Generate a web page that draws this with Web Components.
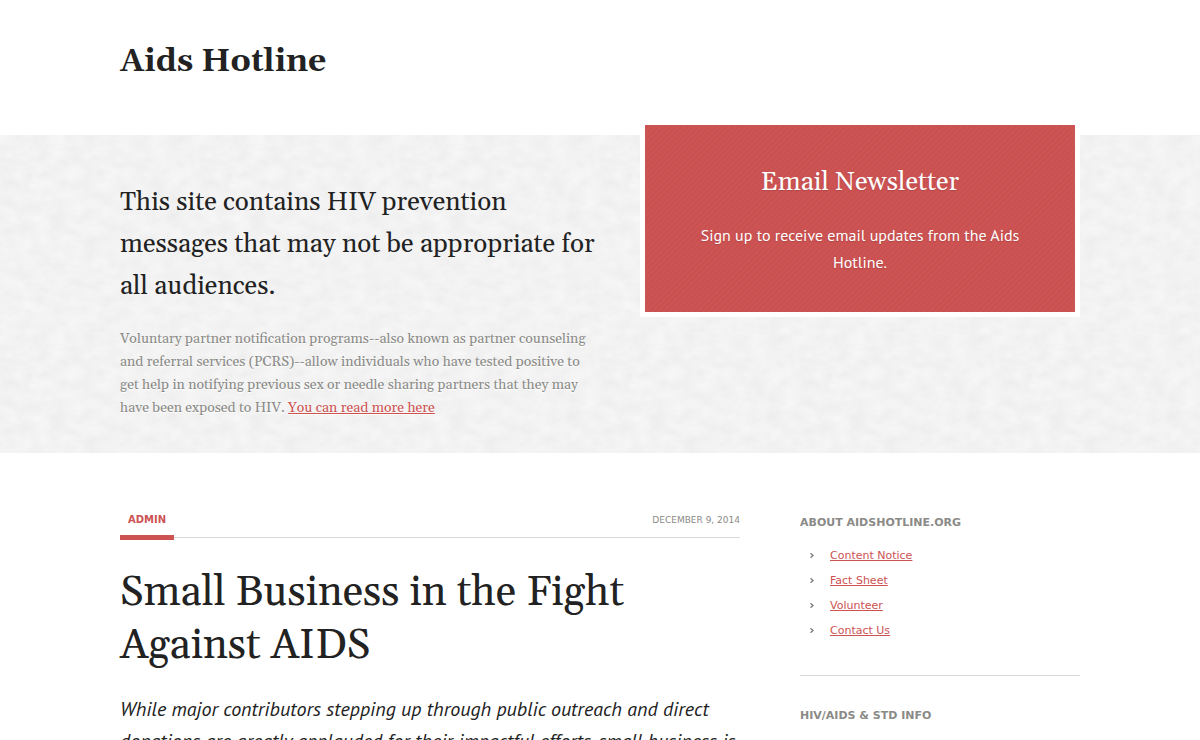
<!DOCTYPE html>
<html lang="en">
<head>
<meta charset="utf-8">
<meta name="viewport" content="width=device-width, initial-scale=1">
<title>Aids Hotline</title>
<style>
:root {
  --serif: Gelasio, Georgia, "Liberation Serif", serif;
  --sans: "PT Sans", "Noto Sans", sans-serif;
  --ui: Verdana, "DejaVu Sans", sans-serif;
  --ink: #222;
  --muted: #8a8a86;
  --accent: #cd5252;
  --rule: #d9d9d9;
}
body { margin: 0; background: #fff; color: var(--ink); font-family: var(--serif); }
</style>
</head>
<body>
<site-header>Aids Hotline</site-header>
<site-hero>
  <span slot="title">This site contains HIV prevention messages that may not be appropriate for all audiences.</span>
  <span slot="text">Voluntary partner notification programs--also known as partner counseling and referral services (PCRS)--allow individuals who have tested positive to get help in notifying previous sex or needle sharing partners that they may have been exposed to HIV. </span>
  <newsletter-box slot="aside">
    <span slot="title">Email Newsletter</span>
    Sign up to receive email updates from the Aids Hotline.
  </newsletter-box>
</site-hero>
<page-columns>
  <blog-post>
    <span slot="author">Admin</span>
    <span slot="date">December 9, 2014</span>
    <span slot="title">Small Business in the Fight Against AIDS</span>
    While major contributors stepping up through public outreach and direct donations are greatly applauded for their impactful efforts, small business is
  </blog-post>
  <side-section slot="aside">
    <span slot="title">About AidsHotline.org</span>
    <side-link>Content Notice</side-link>
    <side-link>Fact Sheet</side-link>
    <side-link>Volunteer</side-link>
    <side-link>Contact Us</side-link>
  </side-section>
  <side-section slot="aside">
    <span slot="title">HIV/AIDS &amp; STD Info</span>
  </side-section>
</page-columns>

<script>
const define = (name, html) => {
  const template = document.createElement('template');
  template.innerHTML = html;
  customElements.define(name, class extends HTMLElement {
    constructor() {
      super();
      this.attachShadow({ mode: 'open' }).append(template.content.cloneNode(true));
    }
  });
};

define('site-header', `
<style>
:host { display: block; }
header { max-width: 960px; margin: 0 auto; padding: 38px 0 49px; }
h1 { margin: 0; font: bold 32px/48px var(--serif); }
</style>
<header><h1><slot></slot></h1></header>`);

define('site-hero', `
<style>
:host {
  display: block;
  background-color: #f2f2f2;
  background-image: url("data:image/svg+xml,%3Csvg xmlns='http://www.w3.org/2000/svg' width='200' height='200'%3E%3Cfilter id='n' x='0' y='0' width='100%25' height='100%25' color-interpolation-filters='sRGB'%3E%3CfeTurbulence type='fractalNoise' baseFrequency='.06 .09' numOctaves='5' seed='4' stitchTiles='stitch'/%3E%3CfeColorMatrix values='.05 0 0 0 .925 .05 0 0 0 .925 .05 0 0 0 .925 0 0 0 0 1'/%3E%3C/filter%3E%3Crect width='200' height='200' filter='url(%23n)'/%3E%3C/svg%3E");
}
.inner { display: flex; align-items: flex-start; gap: 40px; max-width: 960px; margin: 0 auto; }
.message { flex: 1; padding: 47px 0 33px; }
h2 { margin: 0 0 20px; font: 26px/42px var(--serif); }
p { margin: 0; font: 14px/23px var(--serif); color: var(--muted); text-shadow: 0 1px 0 #fff; }
a { color: var(--accent); }
.aside { width: 440px; margin-top: -15px; }
</style>
<section class="inner">
  <div class="message">
    <h2><slot name="title"></slot></h2>
    <p><slot name="text"></slot> <a href="#more">You can read more here</a></p>
  </div>
  <div class="aside"><slot name="aside"></slot></div>
</section>`);

define('newsletter-box', `
<style>
:host {
  display: block; padding: 42px 50px 36px; border: 5px solid #fff; text-align: center; color: #fff;
  background: repeating-linear-gradient(135deg, #ce5353 0 2px, #ca5151 2px 4px) padding-box;
}
h2 { margin: 0 0 23px; font: 26px/32px var(--serif); }
p { margin: 0; font: 16px/27px var(--sans); }
h2, p { text-shadow: 0 1px 1px #b04646; }
</style>
<h2><slot name="title"></slot></h2>
<p><slot></slot></p>`);

define('page-columns', `
<style>
:host { display: flex; gap: 60px; max-width: 960px; margin: 0 auto; padding-top: 60px; }
main { flex: 1; }
aside { width: 280px; }
</style>
<main><slot></slot></main>
<aside><slot name="aside"></slot></aside>`);

define('blog-post', `
<style>
:host { display: block; }
.meta {
  display: flex; justify-content: space-between; align-items: flex-start;
  font: 10px/14px var(--ui); text-transform: uppercase; color: var(--muted);
  background: linear-gradient(var(--rule), var(--rule)) 0 24px / 100% 1px no-repeat;
}
.author { padding: 0 8px 8px; border-bottom: 5px solid var(--accent); font-weight: bold; color: var(--accent); text-decoration: none; }
time { font-size: 9px; }
h2 { margin: 26px 0 21px; font: 42px/53px var(--serif); }
p { margin: 0; font: italic 20px/32px var(--sans); }
</style>
<article>
  <div class="meta">
    <a class="author" href="#admin"><slot name="author"></slot></a>
    <time datetime="2014-12-09"><slot name="date"></slot></time>
  </div>
  <h2><slot name="title"></slot></h2>
  <p><slot></slot></p>
</article>`);

define('side-section', `
<style>
:host { display: block; font: 11px/25px var(--ui); color: var(--muted); }
:host(:not(:last-child)) { margin-bottom: 30px; padding-bottom: 32px; border-bottom: 1px solid var(--rule); }
h3 { margin: 0; font: bold 11px/20px var(--ui); text-transform: uppercase; }
.list { padding-top: 10px; }
</style>
<section><h3><slot name="title"></slot></h3><div class="list" role="list"><slot></slot></div></section>`);

define('side-link', `
<style>
:host { display: flex; align-items: center; gap: 16px; padding-left: 10px; }
svg { width: 4px; height: 5px; flex: none; fill: none; stroke: #777; stroke-width: 1.3; }
a { color: var(--accent); }
</style>
<svg viewBox="0 0 4 5" aria-hidden="true"><path d="M.5 .3 3 2.5 .5 4.7"/></svg>
<a href="#section"><slot></slot></a>`);

document.querySelectorAll('side-link').forEach(link => link.setAttribute('role', 'listitem'));
</script>
</body>
</html>
